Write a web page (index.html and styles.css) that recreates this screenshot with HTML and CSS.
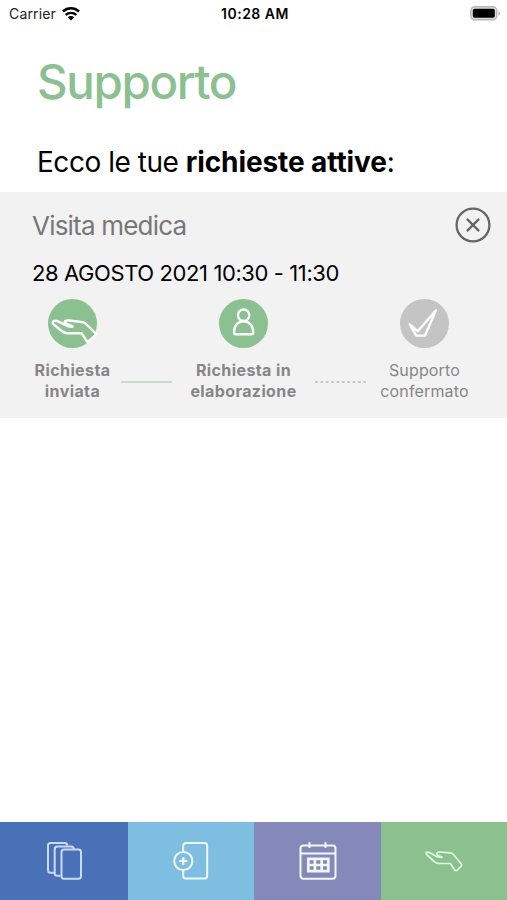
FILE: index.html
```html
<!DOCTYPE html>
<html lang="it">
<head>
  <meta charset="UTF-8">
  <meta name="viewport" content="width=device-width, initial-scale=1">
  <title>Supporto</title>
  <link rel="stylesheet" href="styles.css">
</head>
<body>
  <div class="screen">
    <!-- Status bar -->
    <div class="status-bar">
      <div class="carrier">
        <span>Carrier</span>
        <svg width="18" height="14" viewBox="0 0 18 14">
          <path d="M1 4.500C5.600.300 12.400.300 17 4.500M3.700 7.900c3.100-2.700 7.500-2.700 10.600 0" fill="none" stroke="#000" stroke-width="2.500"/>
          <path d="M5.700 10.200c1.900-1.700 4.700-1.700 6.600 0L9 13.600z"/>
        </svg>
      </div>
      <span class="clock">10:28 AM</span>
      <svg class="battery" width="31" height="15" viewBox="0 0 31 15">
        <rect x=".8" y=".8" width="26" height="13" rx="3.800" fill="#dcdcdc" stroke="#b8b8b8" stroke-width="1.400"/>
        <rect x="2.800" y="2.800" width="22" height="9" rx="1.800"/>
        <path d="M28.400 5.200c2.200.8 2.200 3.400 0 4.200z" fill="#b0b0b0"/>
      </svg>
    </div>

    <h1>Supporto</h1>
    <h2>Ecco le tue <b>richieste attive</b>:</h2>

    <!-- Active request -->
    <div class="request">
      <div class="request-head">
        <span class="request-title">Visita medica</span>
        <button class="close" aria-label="Chiudi">
          <svg width="36" height="36" viewBox="0 0 36 36">
            <circle cx="18" cy="18" r="16.400"/>
            <path d="M11.900 11.900l12.200 12.200M24.100 11.900L11.900 24.100"/>
          </svg>
        </button>
      </div>
      <div class="request-date">28 AGOSTO 2021 10:30 - 11:30</div>
      <div class="steps">
        <div class="step step-sent">
          <svg width="49" height="49" viewBox="0 0 49 49">
            <circle cx="24.500" cy="24.500" r="24.500"/>
            <path d="M25.300 27.700c-3 .2-5.300-.2-7.500-1.500L9.500 22.100c-3.500-1.300-6.500.9-4 3.200L14 32.200c2 1.600 3.500 2.100 6 2.100h13.700l5.800 8.900 9-8L37.500 24.500c-1.500-1.200-2.500-1.500-4.500-1.500l-11.500-1.500c-3.300-.4-6 .7-4.200 2.500 1.500 1.600 4.500 1.500 8 3.700"/>
          </svg>
          <span>Richiesta<br>inviata</span>
        </div>
        <div class="line"></div>
        <div class="step step-working">
          <svg width="49" height="49" viewBox="0 0 49 49">
            <circle cx="24.500" cy="24.500" r="24.500"/>
            <circle class="stroke" cx="24.600" cy="16.200" r="5.700"/>
            <path d="M17 35.200c-1.300 0-2-.7-2-2C15 26.500 19 22.200 24.600 22.200s9.600 4.300 9.600 11c0 1.300-.7 2-2 2z"/>
          </svg>
          <span>Richiesta in<br>elaborazione</span>
        </div>
        <div class="line dotted"></div>
        <div class="step step-confirmed">
          <svg width="49" height="49" viewBox="0 0 49 49">
            <circle cx="24.500" cy="24.500" r="24.500"/>
            <path d="M9.600 25.200l8.100 7L36 11.200 25 36.600h-8.800z"/>
          </svg>
          <span>Supporto<br>confermato</span>
        </div>
      </div>
    </div>

    <!-- Tab bar -->
    <nav class="tabs">
      <a class="tab tab-cards" href="#" aria-label="Schede">
        <svg width="36" height="38" viewBox="0 0 36 38">
          <path d="M7 30.700H3.500C2 30.700 1 29.700 1 28.200V3.500C1 2 2 1 3.500 1h14.300c1.500 0 2.500 1 2.500 2.500"/>
          <path d="M13.500 33.700h-3.300c-1.500 0-2.500-1-2.500-2.500V7C7.700 5.500 8.700 4.500 10.200 4.500h14c1.500 0 2.500 1 2.500 2.500"/>
          <rect x="14.500" y="7.500" width="19.500" height="29.300" rx="2.500"/>
        </svg>
      </a>
      <a class="tab tab-add" href="#" aria-label="Aggiungi">
        <svg width="36" height="38" viewBox="0 0 36 38">
          <path d="M10.200 9.500V4c0-1.800 1-2.900 2.900-2.900h18.200c1.800 0 2.900 1.100 2.900 2.900v29.700c0 1.800-1.100 2.900-2.900 2.900H13.100c-1.900 0-2.900-1.100-2.900-2.900v-5.500"/>
          <circle cx="10.300" cy="19" r="9.100"/>
          <path d="M6.300 19h8M10.300 15v8" stroke-width="2.200"/>
        </svg>
      </a>
      <a class="tab tab-calendar" href="#" aria-label="Calendario">
        <svg width="38" height="38" viewBox="0 0 38 38">
          <rect x="1.500" y="3.500" width="35" height="33.300" rx="3"/>
          <path d="M1.500 11.500h35M10.500 0v6M26.500 0v6"/>
          <path d="M9.300 16.800h20v12.400h-20zM9.300 23h20M15.900 16.800v12.400M22.700 16.800v12.400" stroke-width="2.700"/>
        </svg>
      </a>
      <a class="tab tab-support" href="#" aria-label="Supporto">
        <svg width="38" height="21" viewBox="0 0 38 21">
          <path d="M17.500 6.300c-2.500.2-4.500 0-6.500-1L5.500 2C2.300.2-.5 1.500 2 3.800l7 6.500c1.500 1.400 2.800 2.200 5 2.200h11.500l3.500 5.700c1 1.700 2.200 1.800 3.500.6l3.500-3.500c.8-.8.800-1.800.2-2.600l-8-9.500C27.500 2.300 26.500 1.800 25 1.800L15.500 1C12.500.8 11 2.500 12.500 4c1.300 1.300 3 1 5 2.300"/>
        </svg>
      </a>
    </nav>
  </div>
</body>
</html>
```
FILE: styles.css
```css
/* Page */
* {
  box-sizing: border-box;
}
body {
  margin: 0;
  background: #fff;
  color: #000;
  font-family: Inter, "Liberation Sans", sans-serif;
}
.screen {
  display: flex;
  flex-direction: column;
  height: 900px;
  overflow: hidden;
}

/* Status bar */
.status-bar {
  display: grid;
  grid-template-columns: 1fr auto 1fr;
  align-items: center;
  height: 27px;
  padding: 0 6px 0 9px;
  font-size: 14px;
}
.carrier {
  display: flex;
  align-items: center;
  gap: 6px;
  letter-spacing: 0.15px;
  color: #222;
}
.clock {
  font-weight: 600;
  letter-spacing: 0.5px;
}
.battery {
  justify-self: end;
}

/* Headings */
h1 {
  margin: 25px 0 0 37px;
  font-size: 47.5px;
  line-height: 60px;
  font-weight: 500;
  letter-spacing: -1.4px;
  color: #8bc090;
}
h2 {
  margin: 34px 0 0 37px;
  font-size: 28px;
  line-height: 32px;
  font-weight: 400;
  letter-spacing: -0.47px;
}
h2 b {
  font-weight: 700;
  letter-spacing: -0.1px;
}

/* Request */
.request {
  height: 226px;
  margin-top: 14px;
  padding: 15px 16px 0 32px;
  background: #f2f2f2;
}
.request-head {
  display: flex;
  align-items: center;
  justify-content: space-between;
  height: 36px;
}
.request-title {
  font-size: 26px;
  letter-spacing: -0.8px;
  color: #777;
}
.close {
  width: 36px;
  height: 36px;
  padding: 0;
  border: none;
  background: none;
}
.close svg {
  display: block;
  fill: none;
  stroke: #666;
  stroke-width: 2.3;
}
.request-date {
  margin-top: 16px;
  font-size: 22px;
  line-height: 28px;
  letter-spacing: -0.4px;
}

/* Steps */
.steps {
  display: flex;
  margin-top: 12px;
}
.step {
  display: flex;
  flex-direction: column;
  align-items: center;
  color: #868686;
  font-size: 16px;
  line-height: 21px;
  font-weight: 700;
  letter-spacing: 0.4px;
  text-align: center;
  white-space: nowrap;
}
.step svg {
  margin-bottom: 12px;
  fill: #8bc090;
}
.step svg path,
.step svg .stroke {
  fill: none;
  stroke: #fff;
  stroke-width: 2.4;
  stroke-linejoin: round;
}
.step-sent {
  width: 81px;
}
.step-working {
  width: 143px;
}
.step-confirmed {
  width: 117px;
  font-weight: 400;
  letter-spacing: 0.15px;
}
.step-confirmed svg {
  fill: #c4c4c4;
}
.line {
  width: 51px;
  height: 2px;
  margin: 82px 0 0 8px;
  background: #c5dfc6;
}
.dotted {
  margin-left: 0;
  background: radial-gradient(circle at 1.5px 1px, #c6c6c6 1.2px, transparent 1.6px) 0 0 / 5.4px 2px;
}

/* Tab bar */
.tabs {
  display: grid;
  grid-template-columns: 128px 126px 127px 1fr;
  height: 78px;
  margin-top: auto;
}
.tab {
  display: flex;
  align-items: center;
  justify-content: center;
}
.tab svg {
  fill: none;
  stroke: #f2f8ff;
  stroke-width: 2;
}
.tab-cards {
  background: #4871b7;
}
.tab-cards svg {
  margin-left: 2px;
  stroke: #c9dbf8;
}
.tab-add {
  background: #7dbee1;
}
.tab-calendar {
  background: #8589ba;
}
.tab-support {
  background: #8bc18f;
}
.tab-support svg {
  stroke: #e2f8e2;
  stroke-width: 1.7;
}
```
